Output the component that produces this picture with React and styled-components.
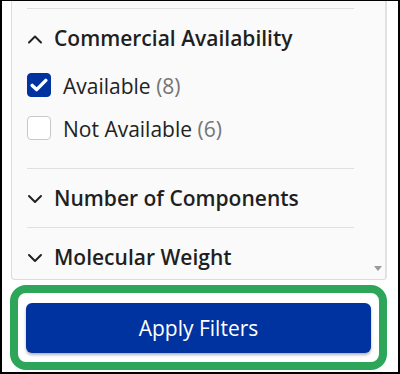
import React, { useState } from "react";
import styled, { createGlobalStyle } from "styled-components";

const GlobalStyle = createGlobalStyle`
  * { box-sizing: border-box; }
  body {
    margin: 0;
    background: #ffffff;
    font-family: "Open Sans", "Noto Sans", sans-serif;
  }
`;

const sections = [
  {
    id: "commercial",
    title: "Commercial Availability",
    open: true,
    options: [
      { id: "available", label: "Available", count: 8, checked: true },
      { id: "not-available", label: "Not Available", count: 6, checked: false },
    ],
  },
  { id: "components", title: "Number of Components", open: false, options: [] },
  { id: "weight", title: "Molecular Weight", open: false, options: [] },
];

const Chevron = ({ up }) => (
  <ChevronIcon width="16" height="10" viewBox="0 0 16 10" fill="none">
    <path
      d={up ? "M2 8.5 L8 2.5 L14 8.5" : "M2 2 L8 8 L14 2"}
      stroke="#222"
      strokeWidth="2"
      strokeLinecap="round"
      strokeLinejoin="round"
    />
  </ChevronIcon>
);

const CheckMark = () => (
  <svg width="18" height="14" viewBox="0 0 18 14" fill="none">
    <path
      d="M2.2 7.4 L6.6 11.6 L15.8 2.4"
      stroke="#fff"
      strokeWidth="3.4"
      strokeLinecap="round"
      strokeLinejoin="round"
    />
  </svg>
);

const App = () => {
  const [data, setData] = useState(sections);

  const toggleOption = (sectionId, optionId) => {
    setData(
      data.map((s) =>
        s.id !== sectionId
          ? s
          : {
              ...s,
              options: s.options.map((o) =>
                o.id === optionId ? { ...o, checked: !o.checked } : o
              ),
            }
      )
    );
  };

  return (
    <>
      <GlobalStyle />
      <Frame>
        <Panel>
          <PanelBody>
            <Divider />
            {data.map((section) => (
              <Section key={section.id}>
                <Header $open={section.open}>
                  <Chevron up={section.open} />
                  {section.title}
                </Header>
                {section.open && (
                  <Options>
                    {section.options.map((opt) => (
                      <Option
                        key={opt.id}
                        onClick={() => toggleOption(section.id, opt.id)}
                      >
                        <Box $checked={opt.checked}>
                          {opt.checked && <CheckMark />}
                        </Box>
                        <Label>
                          {opt.label} <Count>({opt.count})</Count>
                        </Label>
                      </Option>
                    ))}
                  </Options>
                )}
              </Section>
            ))}
          </PanelBody>
          <ScrollTrack>
            <ArrowDown />
          </ScrollTrack>
        </Panel>
        <Highlight>
          <ApplyButton>Apply Filters</ApplyButton>
        </Highlight>
      </Frame>
    </>
  );
};

const Frame = styled.div`
  width: 400px;
  height: 374px;
  border-left: 2px solid #000;
  border-right: 2px solid #000;
  border-top: 1px solid #000;
  border-bottom: 2px solid #000;
  padding: 0 0 0 8px;
  display: flex;
  flex-direction: column;
  overflow: hidden;
`;

const Panel = styled.div`
  width: 376px;
  height: 279px;
  margin-left: 1px;
  background: #fafafa;
  border: 1px solid #dcdcdc;
  border-top: none;
  border-right: 2px solid #e2e2e2;
  border-radius: 0 0 4px 4px;
  display: flex;
  overflow: hidden;
`;

const PanelBody = styled.div`
  flex: 1;
  padding: 7px 17px 0 15px;
  overflow: hidden;
`;

const Divider = styled.div`
  height: 1px;
  background: #e0e0e0;
`;

const Section = styled.div`
  border-bottom: 1px solid #e0e0e0;
`;

const Header = styled.div`
  display: flex;
  align-items: center;
  height: ${({ $open }) => ($open ? "54px" : "58px")};
  padding-top: ${({ $open }) => ($open ? "4px" : "0")};
  font-size: 21px;
  font-weight: 600;
  color: #1f1f1f;
  white-space: nowrap;
  cursor: pointer;
`;

const ChevronIcon = styled.svg`
  margin: 2px 11px 0 0;
  flex-shrink: 0;
`;

const Options = styled.div`
  padding-bottom: 19px;
`;

const Option = styled.div`
  display: flex;
  align-items: center;
  height: 43px;
  cursor: pointer;
`;

const Box = styled.span`
  width: 24px;
  height: 24px;
  border-radius: 4px;
  display: flex;
  align-items: center;
  justify-content: center;
  margin-right: 12px;
  background: ${({ $checked }) => ($checked ? "#0033a0" : "#ffffff")};
  border: 1px solid ${({ $checked }) => ($checked ? "#0033a0" : "#c8c8c8")};
  flex-shrink: 0;
`;

const Label = styled.span`
  font-size: 21px;
  color: #222;
  padding-top: 2px;
  white-space: nowrap;
`;

const Count = styled.span`
  color: #757575;
`;

const ScrollTrack = styled.div`
  width: 14px;
  display: flex;
  align-items: flex-end;
  justify-content: center;
  padding-bottom: 8px;
`;

const ArrowDown = styled.span`
  width: 0;
  height: 0;
  border-left: 4px solid transparent;
  border-right: 4px solid transparent;
  border-top: 5px solid #9a9a9a;
`;

const Highlight = styled.div`
  width: 377px;
  height: 85px;
  margin-top: 5px;
  border: 8px solid #2ea65a;
  border-radius: 16px;
  background: #ffffff;
  padding: 10px 8px 9px 8px;
  display: flex;
`;

const ApplyButton = styled.button`
  flex: 1;
  border: none;
  border-radius: 6px;
  background: #0033a0;
  color: #ffffff;
  font-family: "Open Sans", "Noto Sans", sans-serif;
  font-size: 21px;
  font-weight: 400;
  box-shadow: 0 2px 3px rgba(0, 0, 0, 0.3);
  cursor: pointer;
`;

export default App;
